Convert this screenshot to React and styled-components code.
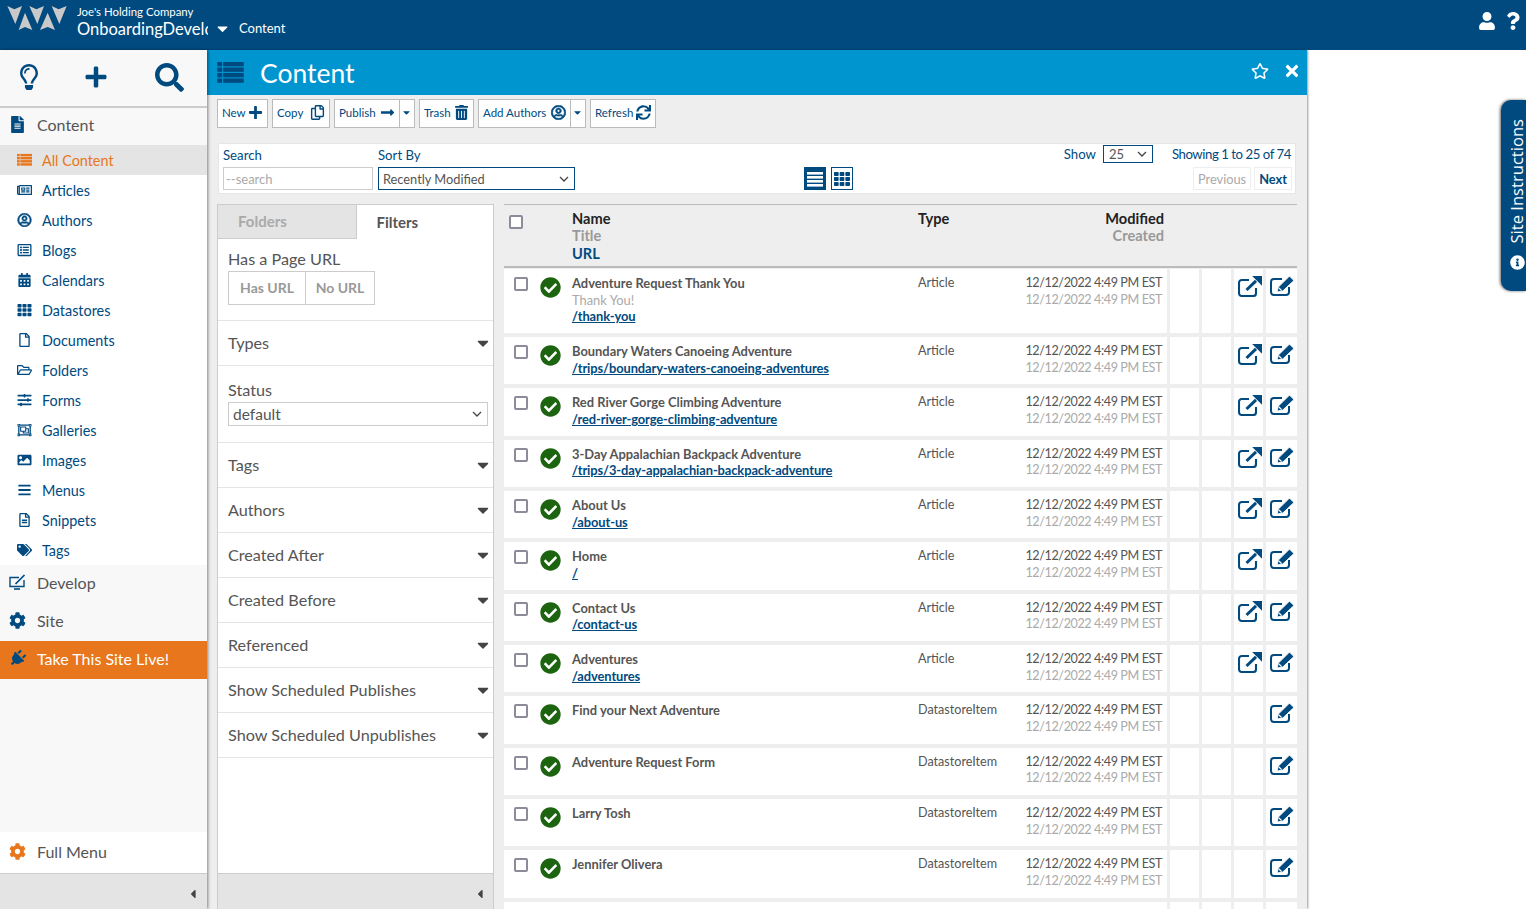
import React from 'react';
import styled, { createGlobalStyle } from 'styled-components';
import {
  FaRegLightbulb, FaPlus, FaSearch, FaFileAlt, FaRegNewspaper, FaRegUserCircle, FaRegListAlt,
  FaCalendarAlt, FaTh, FaRegFile, FaRegFolderOpen, FaSlidersH, FaRegObjectGroup, FaImage, FaBars,
  FaRegFileAlt, FaTags, FaCog, FaPlug, FaCaretDown, FaCaretLeft, FaRegCopy, FaLongArrowAltRight,
  FaTrashAlt, FaSync, FaCheckCircle, FaUser, FaQuestion, FaRegStar, FaTimes, FaInfoCircle,
} from 'react-icons/fa';

const navy = '#004a80';
const chevron = "url(\"data:image/svg+xml,%3Csvg xmlns='http://www.w3.org/2000/svg' width='10' height='6'%3E%3Cpath d='M1 1l4 4 4-4' fill='none' stroke='%23444' stroke-width='1.3'/%3E%3C/svg%3E\")";

const GlobalStyle = createGlobalStyle`
  html, body { margin: 0; height: 100%; overflow: hidden; background: #fff; }
  body { font-family: Lato, "Liberation Sans", sans-serif; color: #555; }
  * { box-sizing: border-box; }
`;

const Page = styled.div`
  height: 909px;
  display: flex;
  flex-direction: column;
  overflow: hidden;
`;

const TopBar = styled.header`
  height: 50px;
  flex: none;
  background: ${navy};
  color: #fff;
  display: flex;
  align-items: flex-start;
`;

const Logo = styled.svg`
  width: 75px;
  height: 40px;
  flex: none;
`;

const Brand = styled.div`
  width: 131px;
  margin-left: 2px;
  padding-top: 5px;
  overflow: hidden;
  white-space: nowrap;
  flex: none;
`;

const Company = styled.div`
  font-size: 11.4px;
  line-height: 13px;
`;

const SiteName = styled.div`
  font-size: 16.5px;
  line-height: 20px;
  margin-top: 1px;
`;

const SiteCaret = styled(FaCaretDown)`
  margin: 20px 0 0 6px;
  font-size: 17px;
`;

const Crumb = styled.div`
  margin: 21px 0 0 8px;
  font-size: 13px;
  line-height: 15px;
`;

const TopActions = styled.div`
  margin-left: auto;
  padding: 12px 4px 0 0;
  display: flex;
  gap: 8px;
  font-size: 18px;
`;

const Body = styled.div`
  flex: 1;
  min-height: 0;
  display: flex;
`;

const Sidebar = styled.aside`
  width: 207px;
  flex: none;
  display: flex;
  flex-direction: column;
  background: #f8f8f8;
  box-shadow: 1px 0 3px rgba(0, 0, 0, 0.45);
  position: relative;
  z-index: 2;
`;

const QuickRow = styled.div`
  height: 58px;
  flex: none;
  display: flex;
  align-items: center;
  padding: 0 0 2px 16px;
  border-bottom: 2px solid #ccc;
  color: ${navy};
`;

const QuickIcon = styled.span`
  display: flex;
  margin-left: ${p => p.$ml || 0}px;
`;

const GroupRow = styled.div`
  height: ${p => p.$h || 38}px;
  flex: none;
  display: flex;
  align-items: center;
  padding: 0 0 ${p => p.$pb ?? 4}px 9px;
  font-size: 16px;
  color: ${p => p.$text || '#555'};
  background: ${p => p.$bg || 'transparent'};
`;

const GroupGlyph = styled.span`
  width: 28px;
  flex: none;
  display: flex;
  font-size: 17px;
  color: ${p => p.$color || navy};
`;

const PlugIcon = styled(FaPlug)`
  transform: rotate(45deg);
`;

const NavList = styled.nav`
  background: #fff;
`;

const NavItem = styled.a`
  height: 30px;
  display: flex;
  align-items: center;
  padding-left: 17px;
  font-size: 14.4px;
  color: ${p => (p.$active ? '#e8761c' : navy)};
  background: ${p => (p.$active ? '#e4e4e4' : 'transparent')};
  svg {
    width: 15px;
    height: 14px;
    margin-right: 10px;
  }
`;

const Spacer = styled.div`
  flex: 1;
`;

const SideFooter = styled.div`
  height: 36px;
  flex: none;
  background: #e4e4e4;
  border-top: 1px solid #ccc;
  display: flex;
  align-items: center;
  justify-content: flex-end;
  padding: 4px ${p => p.$pad}px 0 0;
  font-size: 14px;
  color: #444;
`;

const Main = styled.main`
  width: 1100px;
  flex: none;
  display: flex;
  flex-direction: column;
  background: #eee;
  box-shadow: 1px 0 2px rgba(0, 0, 0, 0.4);
`;

const TitleBar = styled.div`
  height: 45px;
  flex: none;
  background: #0095cf;
  color: #fff;
  display: flex;
  align-items: center;
  padding: 0 6px 0 10px;
`;

const TitleGlyph = styled.span`
  display: flex;
  color: ${navy};
`;

const TitleText = styled.h1`
  margin: 0 0 0 16px;
  font-size: 26.5px;
  font-weight: 400;
`;

const TitleActions = styled.div`
  margin-left: auto;
  display: flex;
  align-items: center;
  gap: 14px;
  font-size: 18px;
  padding-bottom: 4px;
`;

const Toolbar = styled.div`
  margin: 4px 0 0 10px;
  display: flex;
  gap: 4px;
  height: 29px;
  flex: none;
`;

const ToolGroup = styled.div`
  display: flex;
`;

const ToolButton = styled.button`
  width: ${p => p.$w}px;
  height: 29px;
  padding: 0 4px 2px;
  border: 1px solid #bbb;
  background: #fff;
  color: ${navy};
  font: 11.5px Lato, sans-serif;
  display: flex;
  align-items: center;
  justify-content: space-between;
  svg { font-size: 15px; flex: none; }
`;

const CaretButton = styled(ToolButton)`
  width: 15px;
  padding: 0 2px 2px 1px;
  border-left: 0;
  svg { font-size: 11px; }
`;

const AuthorIcon = styled(FaRegUserCircle)`
  stroke: currentColor;
  stroke-width: 22px;
`;

const SearchCard = styled.section`
  margin: 15px 11px 0 11px;
  height: 51px;
  flex: none;
  background: #fff;
  border: 1px solid #e6e6e6;
  padding: 0 3px 0 4px;
  display: flex;
`;

const Field = styled.label`
  width: ${p => p.$w}px;
  margin-right: 5px;
  display: block;
  font-size: 13.2px;
  line-height: 18px;
  color: ${navy};
  padding-top: 2px;
`;

const SearchInput = styled.input`
  display: block;
  width: 100%;
  height: 23px;
  margin-top: 3px;
  border: 1px solid #ccc;
  padding: 0 2px;
  font: 13px Lato, sans-serif;
  &::placeholder { color: #aaa; opacity: 1; }
`;

const SortSelect = styled.select`
  appearance: none;
  display: block;
  width: 100%;
  height: 23px;
  margin-top: 3px;
  border: 1px solid ${navy};
  border-radius: 0;
  background: #fff ${chevron} no-repeat right 5px center;
  color: #555;
  padding: 0 0 0 4px;
  font: 12.8px Lato, sans-serif;
`;

const ViewToggle = styled.button`
  width: ${p => p.$w}px;
  height: 23px;
  margin: 23px 0 0 ${p => p.$ml}px;
  padding: 0;
  border: 1px solid ${navy};
  background: ${p => (p.$on ? navy : '#fff')};
  color: ${p => (p.$on ? '#fff' : navy)};
  display: flex;
  align-items: center;
  justify-content: center;
  font-size: 16px;
`;

const PagerArea = styled.div`
  margin-left: auto;
  display: flex;
  flex-direction: column;
  align-items: flex-end;
`;

const PagerTop = styled.div`
  display: flex;
  align-items: center;
  font-size: 13.2px;
  color: ${navy};
  height: 20px;
`;

const ShowSelect = styled(SortSelect)`
  width: 50px;
  height: 18px;
  margin: 0 19px 0 7px;
  padding-left: 5px;
  font-size: 13px;
`;

const ShowingText = styled.span`
  letter-spacing: -0.45px;
  margin-right: 1px;
`;

const PagerButtons = styled.div`
  display: flex;
  gap: 3px;
  margin-top: 3px;
`;

const PagerButton = styled.button`
  height: 23px;
  padding: 0 4px;
  background: #fff;
  border: 1px solid #eee;
  color: ${p => (p.$off ? '#aaa' : navy)};
  font: ${p => (p.$off ? 400 : 700)} 12.8px Lato, sans-serif;
`;

const Content = styled.div`
  flex: 1;
  min-height: 0;
  margin: 10px 10px 0 10px;
  display: flex;
  gap: 10px;
  overflow: hidden;
`;

const FilterPanel = styled.section`
  width: 277px;
  flex: none;
  display: flex;
  flex-direction: column;
  background: #fff;
  border: 1px solid #ccc;
  border-bottom: 0;
`;

const Tabs = styled.div`
  display: flex;
  height: 34px;
  flex: none;
`;

const Tab = styled.div`
  width: ${p => (p.$on ? 137 : 139)}px;
  display: flex;
  align-items: center;
  padding: 0 0 1px 20px;
  font-size: 15px;
  font-weight: 700;
  color: ${p => (p.$on ? '#555' : '#aaa')};
  background: ${p => (p.$on ? '#fff' : '#e4e4e4')};
  border-right: ${p => (p.$on ? 0 : '1px solid #ccc')};
  border-bottom: ${p => (p.$on ? 0 : '1px solid #ccc')};
`;

const FilterBlock = styled.div`
  padding: ${p => p.$pad};
  border-bottom: 1px solid #e4e4e4;
  font-size: 16.2px;
  flex: none;
`;

const FilterLabel = styled.div`
  line-height: 20px;
  color: #555;
`;

const PairButtons = styled.div`
  display: flex;
  margin-top: 2px;
`;

const PairButton = styled.button`
  height: 34px;
  padding: 0 0 2px;
  width: ${p => p.$w}px;
  background: #fff;
  border: 1px solid #ccc;
  margin-left: ${p => (p.$next ? '-1px' : 0)};
  color: #999;
  font: 700 14px Lato, sans-serif;
`;

const StatusSelect = styled(SortSelect)`
  height: 24px;
  border-color: #ccc;
  margin-top: 2px;
  font-size: 15.5px;
  width: 260px;
`;

const FilterRow = styled.div`
  height: 45px;
  flex: none;
  padding: 0 1px 1px 10px;
  border-bottom: 1px solid #e4e4e4;
  display: flex;
  align-items: center;
  justify-content: space-between;
  font-size: 16.2px;
  color: #555;
  svg { font-size: 18px; color: #444; }
`;

const Results = styled.section`
  flex: 1;
  min-width: 0;
`;

const HeadRow = styled.div`
  height: 64px;
  border-top: 1px solid #bbb;
  border-bottom: 2px solid #bbb;
  display: grid;
  grid-template-columns: 68px 346px 1fr auto;
  padding: 5px 133px 0 0;
  font-size: 14.6px;
  line-height: 17.4px;
  font-weight: 700;
  color: #222;
`;

const HeadCheck = styled.div`
  padding: 5px 0 0 5px;
`;

const HeadMuted = styled.div`
  color: #999;
`;

const HeadLink = styled.div`
  color: ${navy};
`;

const HeadDates = styled.div`
  text-align: right;
`;

const Check = styled.input.attrs({ type: 'checkbox' })`
  appearance: none;
  display: block;
  width: 14px;
  height: 14px;
  margin: 0;
  border: 2px solid #8b8b99;
  border-radius: 2px;
  background: #fff;
`;

const RowList = styled.div`
  display: flex;
  flex-direction: column;
  gap: 4px;
  margin-top: 1px;
`;

const Row = styled.div`
  display: grid;
  grid-template-columns: 1fr 29px 29px 29px 31px;
  column-gap: 3px;
  height: ${p => (p.$tall ? 64 : 47.33)}px;
  flex: none;
`;

const Cell = styled.div`
  background: #fff;
  color: ${navy};
  padding: 7px 0 0 4px;
  svg { display: block; }
`;

const MainCell = styled.div`
  background: #fff;
  display: grid;
  grid-template-columns: 36px 32px 346px 1fr auto;
  padding: 6px 5px 0 0;
  font-size: 12.9px;
  line-height: 16.6px;
  overflow: hidden;
`;

const RowCheck = styled.div`
  padding: 2px 0 0 10px;
`;

const StatusIcon = styled(FaCheckCircle)`
  font-size: 21px;
  color: #1d6411;
  margin-top: 2px;
`;

const ItemName = styled.div`
  font-weight: 700;
  color: #555;
`;

const ItemTitle = styled.div`
  color: #aaa;
`;

const ItemUrl = styled.a`
  display: block;
  font-weight: 700;
  color: ${navy};
  text-decoration: underline;
  letter-spacing: -0.1px;
`;

const ItemType = styled.div`
  font-size: 12.6px;
`;

const Dates = styled.div`
  font-size: 12.6px;
  letter-spacing: -0.4px;
  text-align: right;
  white-space: nowrap;
`;

const DateMuted = styled.div`
  color: #aaa;
`;

const InstructionsTab = styled.aside`
  position: absolute;
  top: 100px;
  right: 0;
  width: 25px;
  height: 191px;
  background: ${navy};
  border-radius: 10px 0 0 10px;
  box-shadow: -1px 0 3px rgba(0, 0, 0, 0.6);
  color: #fff;
  display: flex;
  flex-direction: column-reverse;
  align-items: center;
  gap: 11px;
  padding: 0 0 21px 7px;
  font-family: "Open Sans", sans-serif;
`;

const InstructionsText = styled.span`
  writing-mode: vertical-rl;
  transform: rotate(180deg);
  font-size: 16.6px;
  line-height: 16px;
  white-space: nowrap;
`;

const InstructionsIcon = styled(FaInfoCircle)`
  font-size: 15px;
  flex: none;
`;

const ListIcon = ({ size = 14 }) => (
  <svg width={size} height={size * 0.8} viewBox="0 0 27 22" fill="currentColor">
    {[0, 5.6, 11.2, 16.8].map(y => (
      <React.Fragment key={y}>
        <rect x="0" y={y} width="5" height="4.4" />
        <rect x="6" y={y} width="21" height="4.4" />
      </React.Fragment>
    ))}
  </svg>
);

const RowsIcon = () => (
  <svg width="16" height="16" viewBox="0 0 16 16" fill="currentColor">
    {[1, 5, 9, 13].map(y => <rect key={y} x="0" y={y} width="16" height="2.6" />)}
  </svg>
);

const ExternalIcon = () => (
  <svg width="24" height="21" viewBox="0 0 24 21" fill="none">
    <path d="M11 4H3.8A2.8 2.8 0 0 0 1 6.8v10.4A2.8 2.8 0 0 0 3.8 20h11.4a2.8 2.8 0 0 0 2.8-2.8V12" stroke="currentColor" strokeWidth="2.1" />
    <path d="M8.5 14 L18 4.8" stroke="currentColor" strokeWidth="3" />
    <path d="M14.2 0H24V9.8Z" fill="currentColor" />
  </svg>
);

const EditIcon = () => (
  <svg width="24" height="20" viewBox="0 0 24 20" fill="none">
    <path d="M12 3H4A3 3 0 0 0 1 6v10a3 3 0 0 0 3 3h12a3 3 0 0 0 3-3v-5" stroke="currentColor" strokeWidth="2" />
    <path d="M7 16 L8.4 11 L18.8 0.8 A1 1 0 0 1 20.2 0.8 L23.2 3.8 A1 1 0 0 1 23.2 5.2 L12.8 15 Z" fill="currentColor" stroke="#fff" strokeWidth="0.9" />
    <path d="M9 12 L11.6 14.6" stroke="#fff" strokeWidth="1.3" />
  </svg>
);

const DevelopIcon = () => (
  <svg width="17" height="16" viewBox="0 0 17 16" fill="none" stroke="currentColor">
    <path d="M10 3.5H1v9h14V6" strokeWidth="1.4" />
    <path d="M5 15h6" strokeWidth="1.6" />
    <path d="M6.5 10 L15.5 1" strokeWidth="1.7" />
  </svg>
);

const nav = [
  ['All Content', ListIcon],
  ['Articles', FaRegNewspaper],
  ['Authors', AuthorIcon],
  ['Blogs', FaRegListAlt],
  ['Calendars', FaCalendarAlt],
  ['Datastores', FaTh],
  ['Documents', FaRegFile],
  ['Folders', FaRegFolderOpen],
  ['Forms', FaSlidersH],
  ['Galleries', FaRegObjectGroup],
  ['Images', FaImage],
  ['Menus', FaBars],
  ['Snippets', FaRegFileAlt],
  ['Tags', FaTags],
];

const rows = [
  { name: 'Adventure Request Thank You', title: 'Thank You!', url: '/thank-you', type: 'Article', ext: true },
  { name: 'Boundary Waters Canoeing Adventure', url: '/trips/boundary-waters-canoeing-adventures', type: 'Article', ext: true },
  { name: 'Red River Gorge Climbing Adventure', url: '/red-river-gorge-climbing-adventure', type: 'Article', ext: true },
  { name: '3-Day Appalachian Backpack Adventure', url: '/trips/3-day-appalachian-backpack-adventure', type: 'Article', ext: true },
  { name: 'About Us', url: '/about-us', type: 'Article', ext: true },
  { name: 'Home', url: '/', type: 'Article', ext: true },
  { name: 'Contact Us', url: '/contact-us', type: 'Article', ext: true },
  { name: 'Adventures', url: '/adventures', type: 'Article', ext: true },
  { name: 'Find your Next Adventure', type: 'DatastoreItem' },
  { name: 'Adventure Request Form', type: 'DatastoreItem' },
  { name: 'Larry Tosh', type: 'DatastoreItem' },
  { name: 'Jennifer Olivera', type: 'DatastoreItem' },
  { blank: true },
];

const filters = ['Tags', 'Authors', 'Created After', 'Created Before', 'Referenced', 'Show Scheduled Publishes', 'Show Scheduled Unpublishes'];
const stamp = '12/12/2022 4:49 PM EST';

const App = () => (
  <Page>
    <GlobalStyle />
    <TopBar>
      <Logo viewBox="0 0 225 120" fill="#c9c9c9">
        <path d="M22 18 L43 28 L66 18 L46 72Z" />
        <path d="M75 38 L97 90 L75 81 L56 90Z" />
        <path d="M88 18 L109 28 L132 18 L112 72Z" />
        <path d="M143 38 L165 90 L143 81 L120 90Z" />
        <path d="M155 18 L176 28 L200 18 L178 72Z" />
      </Logo>
      <Brand>
        <Company>Joe's Holding Company</Company>
        <SiteName>OnboardingDevelopment</SiteName>
      </Brand>
      <SiteCaret />
      <Crumb>Content</Crumb>
      <TopActions>
        <FaUser />
        <FaQuestion />
      </TopActions>
    </TopBar>
    <Body>
      <Sidebar>
        <QuickRow>
          <QuickIcon><FaRegLightbulb size={26} /></QuickIcon>
          <QuickIcon $ml={42}><FaPlus size={24} /></QuickIcon>
          <QuickIcon $ml={47}><FaSearch size={29} /></QuickIcon>
        </QuickRow>
        <GroupRow $h={37} $pb={5}>
          <GroupGlyph><FaFileAlt /></GroupGlyph>
          Content
        </GroupRow>
        <NavList>
          {nav.map(([label, Icon], i) => (
            <NavItem key={label} $active={i === 0}>
              <Icon />
              {label}
            </NavItem>
          ))}
        </NavList>
        <GroupRow>
          <GroupGlyph><DevelopIcon /></GroupGlyph>
          Develop
        </GroupRow>
        <GroupRow>
          <GroupGlyph><FaCog /></GroupGlyph>
          Site
        </GroupRow>
        <GroupRow $bg="#e8761c" $text="#fff">
          <GroupGlyph><PlugIcon /></GroupGlyph>
          Take This Site Live!
        </GroupRow>
        <Spacer />
        <GroupRow $h={41} $pb={2} $bg="#fff">
          <GroupGlyph $color="#e8761c"><FaCog /></GroupGlyph>
          Full Menu
        </GroupRow>
        <SideFooter $pad={7}><FaCaretLeft /></SideFooter>
      </Sidebar>
      <Main>
        <TitleBar>
          <TitleGlyph><ListIcon size={27} /></TitleGlyph>
          <TitleText>Content</TitleText>
          <TitleActions>
            <FaRegStar />
            <FaTimes />
          </TitleActions>
        </TitleBar>
        <Toolbar>
          <ToolButton $w={51}>New <FaPlus /></ToolButton>
          <ToolButton $w={58}>Copy <FaRegCopy /></ToolButton>
          <ToolGroup>
            <ToolButton $w={66}>Publish <FaLongArrowAltRight /></ToolButton>
            <CaretButton><FaCaretDown /></CaretButton>
          </ToolGroup>
          <ToolButton $w={55}>Trash <FaTrashAlt /></ToolButton>
          <ToolGroup>
            <ToolButton $w={93}>Add Authors <AuthorIcon /></ToolButton>
            <CaretButton><FaCaretDown /></CaretButton>
          </ToolGroup>
          <ToolButton $w={66}>Refresh <FaSync /></ToolButton>
        </Toolbar>
        <SearchCard>
          <Field $w={150}>
            Search
            <SearchInput placeholder="--search" />
          </Field>
          <Field $w={197}>
            Sort By
            <SortSelect defaultValue="Recently Modified">
              <option>Recently Modified</option>
            </SortSelect>
          </Field>
          <ViewToggle $w={22} $ml={224} $on><RowsIcon /></ViewToggle>
          <ViewToggle $w={22} $ml={5}><FaTh /></ViewToggle>
          <PagerArea>
            <PagerTop>
              Show
              <ShowSelect defaultValue="25">
                <option>25</option>
              </ShowSelect>
              <ShowingText>Showing 1 to 25 of 74</ShowingText>
            </PagerTop>
            <PagerButtons>
              <PagerButton $off>Previous</PagerButton>
              <PagerButton>Next</PagerButton>
            </PagerButtons>
          </PagerArea>
        </SearchCard>
        <Content>
          <FilterPanel>
            <Tabs>
              <Tab>Folders</Tab>
              <Tab $on>Filters</Tab>
            </Tabs>
            <FilterBlock $pad="10px 10px 15px">
              <FilterLabel>Has a Page URL</FilterLabel>
              <PairButtons>
                <PairButton $w={78}>Has URL</PairButton>
                <PairButton $w={70} $next>No URL</PairButton>
              </PairButtons>
            </FilterBlock>
            <FilterRow>Types <FaCaretDown /></FilterRow>
            <FilterBlock $pad="14px 5px 16px 10px">
              <FilterLabel>Status</FilterLabel>
              <StatusSelect defaultValue="default">
                <option>default</option>
              </StatusSelect>
            </FilterBlock>
            {filters.map(label => (
              <FilterRow key={label}>{label} <FaCaretDown /></FilterRow>
            ))}
            <Spacer />
            <SideFooter $pad={6}><FaCaretLeft /></SideFooter>
          </FilterPanel>
          <Results>
            <HeadRow>
              <HeadCheck><Check /></HeadCheck>
              <div>
                Name
                <HeadMuted>Title</HeadMuted>
                <HeadLink>URL</HeadLink>
              </div>
              <div>Type</div>
              <HeadDates>
                Modified
                <HeadMuted>Created</HeadMuted>
              </HeadDates>
            </HeadRow>
            <RowList>
              {rows.map((row, i) => (
                <Row key={i} $tall={i === 0}>
                  <MainCell>
                    <RowCheck><Check /></RowCheck>
                    <div><StatusIcon /></div>
                    <div>
                      <ItemName>{row.name}</ItemName>
                      {row.title && <ItemTitle>{row.title}</ItemTitle>}
                      {row.url && <ItemUrl>{row.url}</ItemUrl>}
                    </div>
                    <ItemType>{row.type}</ItemType>
                    {!row.blank && (
                      <Dates>
                        {stamp}
                        <DateMuted>{stamp}</DateMuted>
                      </Dates>
                    )}
                  </MainCell>
                  <Cell />
                  <Cell />
                  <Cell>{row.ext && <ExternalIcon />}</Cell>
                  <Cell><EditIcon /></Cell>
                </Row>
              ))}
            </RowList>
          </Results>
        </Content>
      </Main>
    </Body>
    <InstructionsTab>
      <InstructionsIcon />
      <InstructionsText>Site Instructions</InstructionsText>
    </InstructionsTab>
  </Page>
);

export default App;
